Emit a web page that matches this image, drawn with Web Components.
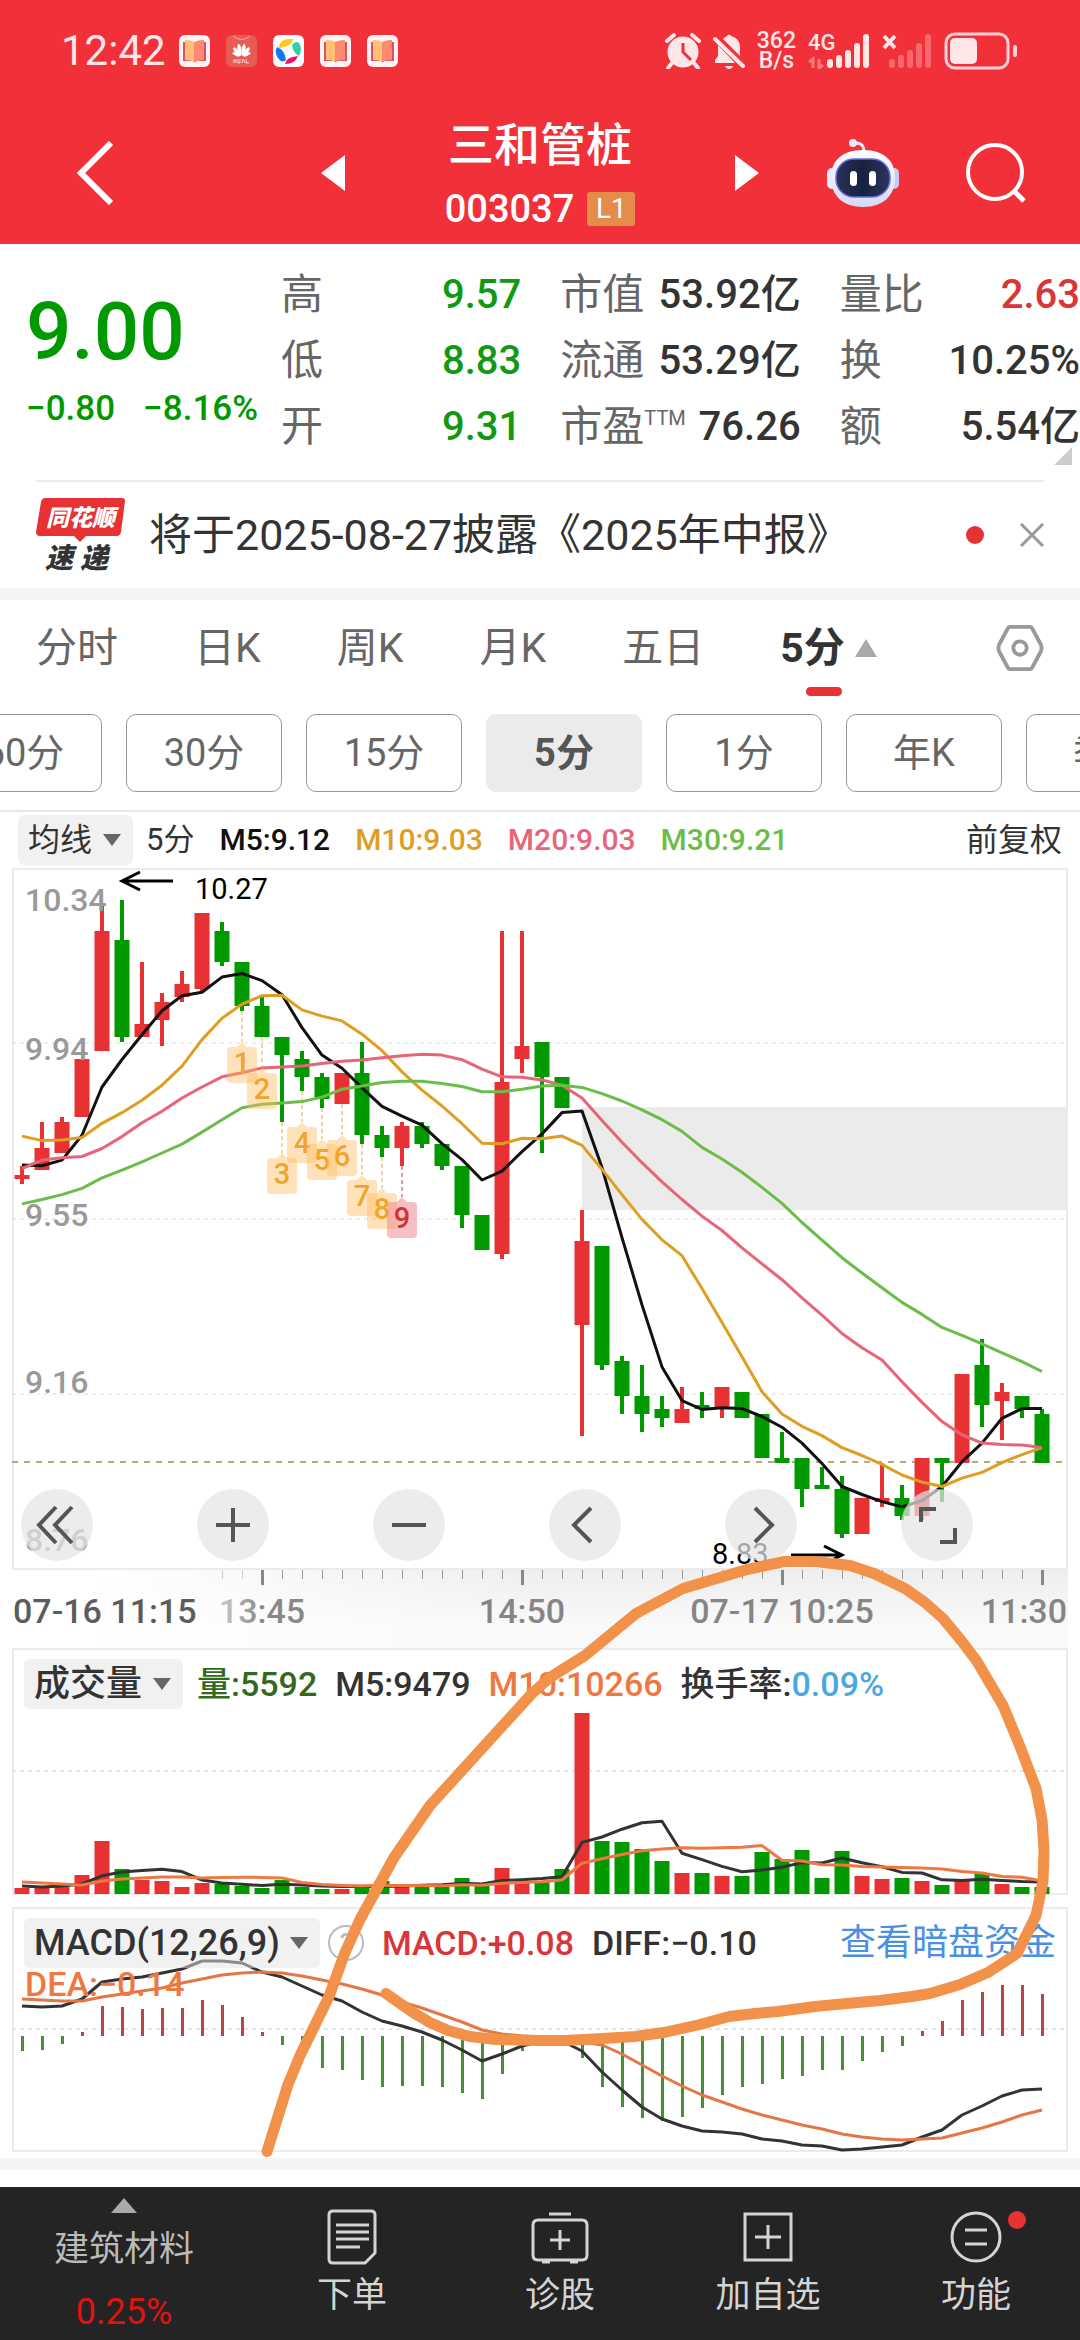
<!DOCTYPE html>
<html lang="zh-CN">
<head>
<meta charset="utf-8">
<meta name="viewport" content="width=device-width, initial-scale=1">
<title>三和管桩 003037</title>
<style>
	body {
		margin: 0;
		background: #fff;
		color: #333;
		font-family: Roboto, "Noto Sans CJK SC", sans-serif;
	}
</style>
</head>
<body>
<stock-page></stock-page>

<script>
// Shared by every element: button/link reset.
const RESET = `
	*, *::before, *::after { box-sizing: border-box; }
	button, select { font: inherit; color: inherit; background: none; border: 0; padding: 0; margin: 0; appearance: none; }
	a { color: inherit; text-decoration: none; }
	svg { display: block; flex: none; }
`;

class BaseElement extends HTMLElement {
	constructor() {
		super();
		this.attachShadow({ mode: "open" });
	}

	connectedCallback() {
		this.shadowRoot.innerHTML = `<style>${RESET}${this.styles()}</style>${this.markup()}`;
	}
}

// ---------- market data ----------

// [up, high, body top, body bottom, low]
const CANDLES = [
	[1, 9.67, 9.65, 9.65, 9.63], [1, 9.77, 9.71, 9.66, 9.66], [1, 9.78, 9.77, 9.7, 9.7],
	[1, 9.91, 9.91, 9.78, 9.78], [1, 10.26, 10.2, 9.93, 9.93], [0, 10.27, 10.18, 9.96, 9.95],
	[1, 10.13, 9.99, 9.96, 9.96], [1, 10.06, 10.04, 10, 9.94], [1, 10.11, 10.08, 10.05, 10.04],
	[1, 10.24, 10.24, 10.07, 10.06], [0, 10.22, 10.2, 10.13, 10.12], [0, 10.13, 10.13, 10.03, 10.02],
	[0, 10.05, 10.03, 9.96, 9.96], [0, 9.96, 9.96, 9.92, 9.77], [0, 9.93, 9.91, 9.87, 9.84],
	[0, 9.88, 9.87, 9.82, 9.8], [1, 9.88, 9.88, 9.81, 9.81], [0, 9.95, 9.88, 9.74, 9.72],
	[0, 9.76, 9.74, 9.71, 9.69], [1, 9.77, 9.76, 9.71, 9.67], [0, 9.77, 9.76, 9.72, 9.71],
	[0, 9.72, 9.72, 9.67, 9.66], [0, 9.67, 9.67, 9.56, 9.53], [0, 9.56, 9.56, 9.48, 9.48],
	[1, 10.2, 9.86, 9.47, 9.46], [1, 10.2, 9.94, 9.91, 9.88], [0, 9.95, 9.95, 9.87, 9.7],
	[0, 9.87, 9.87, 9.8, 9.8], [1, 9.57, 9.5, 9.31, 9.06], [0, 9.49, 9.49, 9.22, 9.21],
	[0, 9.24, 9.23, 9.15, 9.11], [0, 9.22, 9.15, 9.11, 9.07], [0, 9.15, 9.12, 9.1, 9.08],
	[1, 9.17, 9.12, 9.09, 9.09], [0, 9.16, 9.13, 9.12, 9.1], [1, 9.17, 9.17, 9.12, 9.1],
	[0, 9.16, 9.16, 9.1, 9.1], [0, 9.11, 9.11, 9.01, 9.01], [0, 9.07, 9.01, 9, 9],
	[0, 9.01, 9.01, 8.94, 8.9], [0, 8.99, 8.95, 8.94, 8.94], [0, 8.97, 8.94, 8.84, 8.83],
	[1, 8.92, 8.92, 8.84, 8.84], [1, 9, 8.92, 8.92, 8.9], [0, 8.95, 8.92, 8.88, 8.87],
	[1, 9.01, 9.01, 8.88, 8.87], [0, 9.01, 9.01, 9, 8.91], [1, 9.2, 9.2, 9, 9],
	[0, 9.28, 9.22, 9.13, 9.08], [1, 9.18, 9.16, 9.14, 9.05], [0, 9.15, 9.15, 9.12, 9.1],
	[0, 9.12, 9.11, 9, 9],
];

const VOLUMES = [
	6, 6, 7, 19, 53, 25, 14, 13, 7, 11, 10, 8, 6, 14, 7, 5, 5, 8, 13, 9, 9, 7, 16, 9, 26, 13,
	13, 25, 181, 53, 52, 45, 33, 21, 21, 18, 18, 42, 35, 44, 16, 43, 18, 15, 16, 13, 9, 15, 21, 10, 7, 7,
];

const MACD = [
	-15, -14, -8, 4, 30, 29, 27, 28, 28, 36, 31, 19, 4, -9, -20, -32, -34, -44, -51, -50, -50, -51, -57, -63, -38, -15,
	-5, -4, -22, -51, -71, -82, -85, -81, -72, -59, -51, -48, -43, -40, -34, -34, -25, -16, -10, 5, 15, 36, 44, 51, 51, 42,
];
const DIFF = [
	99, 100, 99, 92, 75, 72, 70, 66, 62, 54, 54, 56, 65, 70, 79, 88, 94, 105, 114, 119, 125, 133, 143, 154, 147, 139,
	134, 134, 144, 165, 183, 200, 212, 219, 224, 225, 227, 232, 234, 238, 239, 243, 242, 240, 238, 230, 223, 208, 199, 189, 183, 182,
];
const DEA = [
	92, 93, 94, 94, 90, 87, 84, 81, 76, 72, 68, 66, 65, 66, 69, 73, 77, 82, 88, 95, 101, 108, 115, 123, 127, 129,
	130, 131, 135, 138, 147, 158, 169, 179, 188, 195, 202, 208, 213, 218, 222, 227, 230, 232, 233, 232, 231, 226, 221, 215, 208, 203,
];

// Averages for the first bars, whose window reaches back before the chart.
const LEAD = {
	5: [9.672, 9.67, 9.683, 9.739],
	10: [9.737, 9.727, 9.728, 9.734, 9.766, 9.79, 9.818, 9.852, 9.895],
	20: [9.664, 9.683, 9.688, 9.691, 9.709, 9.736, 9.767, 9.793, 9.823, 9.848, 9.871, 9.88, 9.891, 9.893, 9.895, 9.901, 9.906, 9.909, 9.914],
	30: [9.584, 9.594, 9.605, 9.619, 9.643, 9.66, 9.679, 9.699, 9.719, 9.746, 9.774, 9.801, 9.809, 9.812, 9.815, 9.825, 9.843, 9.85, 9.858, 9.861, 9.861, 9.856, 9.849, 9.837, 9.837, 9.843, 9.85, 9.852, 9.847],
};
const VOL_LEAD = {
	5: [8, 7, 8, 10],
	10: [12, 11, 10, 9, 13, 15, 16, 17, 17],
};

const RED = "#e73132";
const GREEN = "#009900";

const xAt = (i) => 10 + i * 20;
const priceY = (p) => Math.round(1 + (10.34 - p) * 443);

function average(values, n, lead) {
	return values.map((v, i) => {
		if (i < n - 1) return lead[i];
		return values.slice(i - n + 1, i + 1).reduce((a, b) => a + b, 0) / n;
	});
}

function line(ys, color, width = 3) {
	const points = ys.map((y, i) => `${xAt(i)},${y.toFixed(1)}`).join(" ");
	return `<polyline points="${points}" fill="none" stroke="${color}" stroke-width="${width}" stroke-linejoin="round"/>`;
}

const caret = `<svg class="caret" width="18" height="14" viewBox="0 0 18 14" aria-hidden="true"><path d="M0 1h18L9 13z" fill="#666"/></svg>`;

// ---------- status bar ----------

class StatusBar extends BaseElement {
	styles() {
		return `
			:host { display: flex; align-items: center; height: 102px; padding: 0 63px 0 61px; color: #ffe6e7; }
			time { font-size: 42px; line-height: 48px; margin-right: 13px; }
			.apps { display: flex; gap: 16px; }
			.right { margin-left: auto; display: flex; align-items: center; gap: 12px; }
			.speed { font-size: 23px; line-height: 20px; text-align: center; font-weight: 500; }
		`;
	}

	markup() {
		const book = `<svg width="31" height="32" viewBox="0 0 31 32"><rect width="31" height="32" rx="6" fill="#fff4f2"/><path d="M4 7h23v19H17l-1.500 1.500L14 26H4z" fill="#d8506a"/><path d="M6 5q6 0 9.500 2v20Q12 25 6 25z" fill="#ffbf74"/><path d="M25 5q-6 0-9.500 2v20Q19 25 25 25z" fill="#ff8a70"/></svg>`;
		const bars = (fill) => [9, 13, 18, 25, 34].map((h, i) => `<rect x="${i * 9}" y="${35 - h}" width="6" height="${h}" rx="3" fill="${fill}"/>`).join("");
		return `
			<time>12:42</time>
			<div class="apps">
				${book}
				<svg width="31" height="32" viewBox="0 0 31 32"><rect width="31" height="32" rx="6" fill="#e85b52"/><path d="M7 1q8.500 7 17 0" fill="none" stroke="#ffb0a0"/><g fill="#fff"><ellipse cx="13.500" cy="15" rx="2" ry="6" transform="rotate(-8 13.500 15)"/><ellipse cx="17.500" cy="15" rx="2" ry="6" transform="rotate(8 17.500 15)"/><ellipse cx="10.500" cy="16.500" rx="1.800" ry="5" transform="rotate(-35 10.500 16.500)"/><ellipse cx="20.500" cy="16.500" rx="1.800" ry="5" transform="rotate(35 20.500 16.500)"/><ellipse cx="10" cy="19.500" rx="1.300" ry="4" transform="rotate(-65 10 19.500)"/><ellipse cx="21" cy="19.500" rx="1.300" ry="4" transform="rotate(65 21 19.500)"/></g><path d="M8 24v4M8 26h2M10 24v4M12 24v4h2v-4M16 28l1-4 2 4M20 24v4h3" fill="none" stroke="#fff" stroke-width=".7"/></svg>
				<svg width="31" height="32" viewBox="0 0 31 32"><rect width="31" height="32" rx="6" fill="#fff"/><path d="M6 13Q6 3 20 4q0 7-14 9z" fill="#f8cc18"/><path d="M19 10q3-5 7-2 4 6 0 13-6-3-7-11z" fill="#34cfa5"/><path d="M25 21q-3 8-13 8 1-7 13-8z" fill="#f0135f"/><path d="M4 12q8 3 9 13-4 4-8-2-4-6-1-11z" fill="#1476f2"/></svg>
				${book}${book}
			</div>
			<div class="right">
				<svg width="36" height="36" viewBox="0 0 36 36" aria-label="闹钟"><g fill="#ffe6e7"><circle cx="18" cy="19" r="15.500"/><path d="M2 8l7-6M34 8l-7-6M7 30l-4 5M29 30l4 5" stroke="#ffe6e7" stroke-width="4" stroke-linecap="round"/></g><path d="M18 10v9l8 8" fill="none" stroke="#f23039" stroke-width="3"/></svg>
				<svg width="32" height="36" viewBox="0 0 32 36" aria-label="静音"><g fill="#ffe6e7"><path d="M5 12l17 18H2v-3l3-4zM10 6q3-3 4-3 2-3 4 0 9 2 9 12v8z"/><path d="M12 33h8q-1 3-4 3t-4-3z"/></g><path d="M2 6l28 27" stroke="#ffe6e7" stroke-width="4" stroke-linecap="round"/></svg>
				<div class="speed">362<br>B/s</div>
				<svg width="62" height="36" viewBox="0 0 62 36"><text x="0" y="17" font-size="22" font-weight="500" fill="#ffe6e7">4G</text><path d="M5 35V26l-4 3M11 26v9l4-3" fill="none" stroke="#f87a80" stroke-width="3"/><g transform="translate(19 0)">${bars("#ffe6e7")}</g></svg>
				<svg width="50" height="36" viewBox="0 0 50 36"><path d="M2 3l11 12M13 3L2 15" stroke="#ffe6e7" stroke-width="4"/><g transform="translate(7 0)">${bars("#f8676d")}</g></svg>
				<svg width="73" height="38" viewBox="0 0 73 38" aria-label="电量"><rect x="2" y="2" width="62" height="34" rx="9" fill="none" stroke="#ffd0d3" stroke-width="3"/><rect x="6" y="6" width="27" height="26" rx="5" fill="#ffe6e7"/><rect x="69" y="13" width="4" height="12" rx="2" fill="#ffd0d3"/></svg>
			</div>`;
	}
}

// ---------- title bar ----------

class TitleBar extends BaseElement {
	styles() {
		return `
			:host { display: grid; grid-template-columns: 1fr auto 1fr; align-items: center; height: 142px; color: #fff; }
			.side { display: flex; align-items: center; justify-content: space-between; }
			.left { padding: 0 100px 0 76px; }
			.right { padding: 0 54px 0 100px; }
			.name { padding-top: 8px; }
			h1 { margin: 0; font-size: 46px; line-height: 64px; font-weight: 500; text-align: center; }
			p { margin: 0; display: flex; align-items: center; gap: 13px; font-size: 38px; line-height: 64px; font-weight: 500; }
			.tag { background: #e58c4a; border-radius: 3px; font-size: 28px; line-height: 34px; width: 48px; text-align: center; font-weight: 400; }
		`;
	}

	markup() {
		return `
			<div class="side left">
				<button aria-label="返回"><svg width="38" height="64" viewBox="0 0 38 64"><path d="M35 2L5 32l30 30" fill="none" stroke="#fff" stroke-width="6"/></svg></button>
				<button aria-label="上一只"><svg width="24" height="36" viewBox="0 0 24 36"><path d="M24 0v36L0 18z" fill="#fff"/></svg></button>
			</div>
			<div class="name">
				<h1>三和管桩</h1>
				<p>003037<span class="tag">L1</span></p>
			</div>
			<div class="side right">
				<button aria-label="下一只"><svg width="24" height="36" viewBox="0 0 24 36"><path d="M0 0v36l24-18z" fill="#fff"/></svg></button>
				<button aria-label="智能助手"><svg width="72" height="68" viewBox="0 0 72 68">
					<defs>
						<linearGradient id="head" x2="0" y2="1"><stop offset="0" stop-color="#fff"/><stop offset="1" stop-color="#d5daf5"/></linearGradient>
						<linearGradient id="visor"><stop offset="0" stop-color="#2a3358"/><stop offset=".5" stop-color="#16213f"/><stop offset="1" stop-color="#2c3561"/></linearGradient>
					</defs>
					<path d="M26 5q11-3 11 8" fill="none" stroke="#ece9fb" stroke-width="3"/><circle cx="26" cy="4" r="4" fill="#ece9fb"/>
					<rect x="0" y="29" width="10" height="21" rx="5" fill="#e8e9fa"/><rect x="62" y="29" width="10" height="21" rx="5" fill="#c8ccf0"/>
					<path d="M36 11c22 0 32 12 32 27 0 19-12 30-32 30S4 57 4 38c0-15 10-27 32-27z" fill="url(#head)"/>
					<rect x="9" y="20" width="54" height="38" rx="18" fill="url(#visor)" stroke="#6f68e0" stroke-width="1.500"/>
					<rect x="23" y="32" width="7" height="15" rx="3.500" fill="#fff"/><rect x="42" y="32" width="7" height="15" rx="3.500" fill="#fff"/>
				</svg></button>
				<button aria-label="搜索"><svg width="60" height="60" viewBox="0 0 60 60"><circle cx="29" cy="29" r="27" fill="none" stroke="#fff" stroke-width="4"/><path d="M48 48l10 10" stroke="#fff" stroke-width="5"/></svg></button>
			</div>`;
	}
}

// ---------- quote ----------

class QuoteBoard extends BaseElement {
	styles() {
		return `
			:host { display: grid; grid-template-columns: 255px 1fr; padding: 18px 0 20px 26px; position: relative; }
			.price { color: #009900; font-weight: 500; padding-top: 22px; }
			.price strong { display: block; font-size: 80px; line-height: 96px; font-weight: 500; }
			.change { display: flex; gap: 28px; font-size: 35px; line-height: 58px; white-space: nowrap; }
			dl { margin: 0; display: grid; grid-template-columns: repeat(3, 1fr); column-gap: 39px; font-size: 42px; line-height: 66px; }
			dl div { display: flex; justify-content: space-between; height: 66px; white-space: nowrap; }
			dt { color: #666; }
			sup { font-size: 20px; line-height: 20px; vertical-align: 16px; }
			dd { margin: 0; font-size: 40px; font-weight: 500; }
			.down { color: #129912; }
			.up { color: #d83638; }
			.corner { position: absolute; right: 8px; bottom: 15px; }
		`;
	}

	markup() {
		const stats = [
			["高", "9.57", "down"], ["市值", "53.92亿"], ["量比", "2.63", "up"],
			["低", "8.83", "down"], ["流通", "53.29亿"], ["换", "10.25%"],
			["开", "9.31", "down"], ["市盈<sup>TTM</sup>", "76.26"], ["额", "5.54亿"],
		];
		return `
			<div class="price">
				<strong>9.00</strong>
				<div class="change"><span>−0.80</span><span>−8.16%</span></div>
			</div>
			<dl>${stats.map(([k, v, c = ""]) => `<div><dt>${k}</dt><dd class="${c}">${v}</dd></div>`).join("")}</dl>
			<svg class="corner" width="18" height="18" viewBox="0 0 18 18"><path d="M18 0v18H0z" fill="#ccc"/></svg>`;
	}
}

// ---------- news ----------

class NewsBar extends BaseElement {
	styles() {
		return `
			:host { display: block; padding: 0 36px; border-bottom: 12px solid #f4f4f4; }
			.row { display: flex; align-items: center; border-top: 2px solid #ebebeb; height: 108px; }
			.logo { margin-right: 24px; overflow: visible; }
			a { font-size: 43px; line-height: 60px; white-space: nowrap; }
			.dot { margin-left: auto; width: 18px; height: 18px; border-radius: 50%; background: #e73132; margin-right: 36px; }
		`;
	}

	markup() {
		return `
			<div class="row">
				<svg class="logo" width="89" height="80" viewBox="0 0 89 80">
					<path d="M9 3h77q3 0 3 3l-4 31q-1 4-4 4H50l-6 6-6-6H4q-4 0-4-4L5 7q1-4 4-4z" fill="#e73132"/>
					<g font-weight="900" font-style="italic" font-family="Noto Sans CJK SC, sans-serif">
						<text x="10" y="31" font-size="23" fill="#fff">同花顺</text>
						<text x="9" y="73" font-size="28" fill="#333">速</text><text x="44" y="73" font-size="28" fill="#333">递</text>
					</g>
				</svg>
				<a href="#">将于2025-08-27披露《2025年中报》</a>
				<span class="dot"></span>
				<button aria-label="关闭"><svg width="24" height="24" viewBox="0 0 24 24"><path d="M1 1l22 22M23 1L1 23" stroke="#999" stroke-width="3"/></svg></button>
			</div>`;
	}
}

// ---------- period tabs ----------

class PeriodTabs extends BaseElement {
	styles() {
		return `
			:host { display: block; border-bottom: 2px solid #e8e8e8; overflow: hidden; }
			.tabs { display: flex; align-items: center; gap: 76px; padding: 0 36px; height: 96px; color: #666; font-size: 41px; line-height: 60px; white-space: nowrap; }
			.on { display: flex; align-items: center; gap: 10px; color: #333; font-weight: 700; position: relative; }
			.on::after { content: ""; position: absolute; left: 26px; bottom: -18px; width: 36px; height: 9px; border-radius: 5px; background: #e73132; }
			.set { margin-left: auto; }
			.pills { display: flex; gap: 24px; margin: 18px 0 18px -54px; }
			.pills button { flex: none; width: 156px; height: 78px; border: 1px solid #999; border-radius: 10px; color: #666; font-size: 38px; line-height: 54px; }
			.pills .active { background: #ebebeb; border-color: #ebebeb; font-weight: 700; color: #555; }
		`;
	}

	markup() {
		const pills = ["60分", "30分", "15分", "5分", "1分", "年K", "季K"];
		return `
			<nav class="tabs">
				${["分时", "日K", "周K", "月K", "五日"].map((t) => `<button>${t}</button>`).join("")}
				<button class="on">5分<svg width="22" height="18" viewBox="0 0 22 18"><path d="M11 0l11 18H0z" fill="#aaa"/></svg></button>
				<button class="set" aria-label="设置"><svg width="48" height="46" viewBox="0 0 50 48"><path d="M15 2h20q2 0 3 2l9 17q1 3 0 6l-9 17q-1 2-3 2H15q-2 0-3-2L3 27q-1-3 0-6l9-17q1-2 3-2z" fill="none" stroke="#999" stroke-width="4"/><circle cx="25" cy="24" r="7" fill="none" stroke="#999" stroke-width="4"/></svg></button>
			</nav>
			<div class="pills">${pills.map((p) => `<button class="${p === "5分" ? "active" : ""}">${p}</button>`).join("")}</div>`;
	}
}

// ---------- indicator picker ----------

class IndicatorPicker extends BaseElement {
	styles() {
		return `
			:host { display: inline-flex; align-items: center; position: relative; background: rgba(228, 228, 228, .5); border-radius: 6px; height: 50px; color: #333; }
			select { height: 50px; padding: 0 40px 0 10px; }
			.caret { position: absolute; right: 12px; pointer-events: none; }
		`;
	}

	markup() {
		const name = this.getAttribute("name");
		return `<select aria-label="指标"><option>${name}</option></select>${caret}`;
	}
}

// ---------- candles ----------

class CandleChart extends BaseElement {
	styles() {
		return `
			:host { display: block; padding: 0 12px; }
			.head { display: flex; align-items: center; gap: 25px; height: 56px; padding: 0 6px; font-size: 30px; line-height: 50px; font-weight: 500; white-space: nowrap; }
			.head indicator-picker { font-size: 32px; font-weight: 400; margin-right: -12px; }
			.head b { font-weight: 400; font-size: 31px; }
			.adjust { margin-left: auto; font-weight: 400; font-size: 32px; }
			.plot { position: relative; }
			.plot svg { width: 100%; height: auto; }
			.tools { position: absolute; left: 9px; bottom: 9px; display: flex; gap: 104px; }
			.tools button { width: 72px; height: 72px; border-radius: 50%; background: rgba(228, 228, 228, .72); display: grid; place-items: center; }
			.tools svg { width: 42px; height: 42px; fill: none; stroke: #555; stroke-width: 4; }
		`;
	}

	candles() {
		return CANDLES.map(([up, high, top, bottom, low], i) => {
			const color = up ? RED : GREEN;
			const y = priceY(top);
			const h = Math.max(priceY(bottom) - y, 4);
			const wick = priceY(high);
			return `<rect x="${xAt(i) - 2}" y="${wick}" width="4" height="${Math.max(priceY(low) - wick, 1)}" fill="${color}"/>
				<rect x="${xAt(i) - 7.5}" y="${y}" width="15" height="${h}" fill="${color}"/>`;
		}).join("");
	}

	// Numbered tags hang under nine bars in a row.
	counts() {
		let out = "";
		for (let n = 1; n <= 9; n++) {
			const i = n + 10;
			const x = xAt(i);
			const low = priceY(CANDLES[i][4]);
			const y = low + 31;
			const last = n === 9;
			out += `<path d="M${x} ${low}v31" stroke="${last ? "#b04040" : "#e0a848"}" stroke-width="1" stroke-dasharray="4 3"/>
				<path d="M${x} ${y}l5 5h6q4 0 4 4v28q0 4-4 4h-22q-4 0-4-4v-28q0-4 4-4h6z" fill="${last ? "#ee8c92" : "#ffb95a"}" fill-opacity="${last ? 0.55 : 0.42}"/>
				<text x="${x}" y="${y + 31}" font-size="29" font-weight="500" text-anchor="middle" fill="${last ? "#d0343a" : "#f2a32c"}">${n}</text>`;
		}
		return out;
	}

	markup() {
		const closes = CANDLES.map((c) => (c[0] ? c[2] : c[3]));
		const ma = (n) => average(closes, n, LEAD[n]).map((p) => 1 + (10.34 - p) * 443);
		const grid = [175, 351, 526].map((y) => `<path d="M0 ${y}h1056" stroke="#ddd" stroke-dasharray="4 4"/>`).join("");
		const scale = [["10.34", 43], ["9.94", 192], ["9.55", 358], ["9.16", 525], ["8.76", 683]];
		const icons = [
			["最左", "M20 3L3 21l17 18M36 3L19 21l17 18"], ["放大", "M21 4v34M4 21h34"], ["缩小", "M4 21h34"],
			["左移", "M27 4L10 21l17 17"], ["右移", "M15 4l17 17-17 17"], ["全屏", "M5 18V5h15M39 24v14H24"],
		];
		return `
			<div class="head">
				<indicator-picker name="均线"></indicator-picker>
				<b>5分</b>
				<span style="color:#111">M5:9.12</span>
				<span style="color:#df9e22">M10:9.03</span>
				<span style="color:#e86478">M20:9.03</span>
				<span style="color:#6bbd4a">M30:9.21</span>
				<span class="adjust">前复权</span>
			</div>
			<div class="plot">
				<svg viewBox="0 0 1056 702">
					<rect x="1" y="1" width="1054" height="700" fill="none" stroke="#ebebeb" stroke-width="2"/>
					${grid}
					<rect x="570" y="239" width="486" height="103" fill="#ebebeb"/>
					<path d="M0 594h1056" stroke="#bba97c" stroke-width="2" stroke-dasharray="6 6"/>
					${this.candles()}
					${line(ma(5), "#111")}${line(ma(10), "#df9e22")}${line(ma(20), "#e86478")}${line(ma(30), "#6bbd4a")}
					${this.counts()}
					<g font-size="32" font-weight="500" fill="#999">${scale.map(([t, y]) => `<text x="13" y="${y}">${t}</text>`).join("")}</g>
					<g fill="none" stroke="#000" stroke-width="3"><path d="M161 13h-51M128 4l-18 9 18 9"/><path d="M779 687h51M812 678l18 9-18 9"/></g>
					<text x="183" y="31" font-size="29">10.27</text>
					<text x="700" y="696" font-size="29">8.83</text>
				</svg>
				<div class="tools">${icons.map(([t, d]) => `<button aria-label="${t}"><svg viewBox="0 0 42 42"><path d="${d}"/></svg></button>`).join("")}</div>
			</div>`;
	}
}

class TimeAxis extends BaseElement {
	styles() {
		return `
			:host { display: block; margin: 0 12px; background: linear-gradient(to right, #fff 8%, rgba(255, 255, 255, 0) 50%), linear-gradient(#eee, #f9f9f9 70%); }
			svg { width: 100%; height: auto; }
		`;
	}

	markup() {
		let ticks = "";
		for (let i = 10; i < 52; i++) {
			const major = i % 13 === 12;
			ticks += `<rect x="${xAt(i) - (major ? 1 : 0)}" y="0" width="${major ? 3 : 1}" height="${major ? 15 : 9}" fill="${major ? "#888" : i < 12 ? "#ccc" : "#999"}"/>`;
		}
		return `
			<svg viewBox="0 0 1056 78">
				<defs><linearGradient id="fade"><stop offset="0" stop-color="#ccc"/><stop offset=".5" stop-color="#888"/></linearGradient></defs>
				${ticks}
				<g font-size="34" font-weight="500" fill="#858585">
					<text x="1" y="53" fill="#5c5c5c">07-16 11:15</text>
					<text x="250" y="53" text-anchor="middle" fill="url(#fade)">13:45</text>
					<text x="510" y="53" text-anchor="middle">14:50</text>
					<text x="770" y="53" text-anchor="middle">07-17 10:25</text>
					<text x="1055" y="53" text-anchor="end">11:30</text>
				</g>
			</svg>`;
	}
}

// ---------- lower panels ----------

// Header laid over the plot in one grid cell.
const PANEL = `
	:host { display: grid; margin: 0 12px; }
	.head, .plot { grid-area: 1 / 1; }
	.plot { width: 100%; height: auto; }
	.head { position: relative; align-self: start; padding: 11px 12px 0; font-size: 34px; line-height: 50px; font-weight: 500; }
	.row { display: flex; align-items: center; gap: 18px; white-space: nowrap; }
	indicator-picker { font-size: 36px; margin-right: -4px; }
`;

class VolumePanel extends BaseElement {
	styles() {
		return PANEL + `:host { margin-bottom: 12px; }`;
	}

	markup() {
		const bars = VOLUMES.map((v, i) => `<rect x="${xAt(i) - 7.5}" y="${246 - v}" width="15" height="${v}" fill="${CANDLES[i][0] ? RED : GREEN}"/>`).join("");
		const ma = (n) => average(VOLUMES, n, VOL_LEAD[n]).map((v) => 246 - v);
		return `
			<svg class="plot" viewBox="0 0 1056 247">
				<rect x="1" y="1" width="1054" height="245" fill="none" stroke="#ebebeb" stroke-width="2"/>
				<path d="M0 123h1056" stroke="#e5e5e5" stroke-width="2" stroke-dasharray="4 4"/>
				${bars}
				${line(ma(5), "#333")}${line(ma(10), "#ef7742")}
			</svg>
			<div class="head"><div class="row">
				<indicator-picker name="成交量"></indicator-picker>
				<span style="color:#33691e">量:5592</span>
				<span>M5:9479</span>
				<span style="color:#ef7742">M10:10266</span>
				<span>换手率:<span style="color:#4aa8e0">0.09%</span></span>
			</div></div>`;
	}
}

class MacdPanel extends BaseElement {
	styles() {
		return PANEL + `
			.help { width: 36px; height: 36px; border: 2px solid #bbb; border-radius: 50%; font-size: 26px; line-height: 30px; color: #bbb; margin: 0 0 0 -6px; }
			.link { margin-left: auto; color: #4a90e2; font-size: 36px; font-weight: 400; }
			.dea { color: #ef7742; line-height: 32px; padding-left: 1px; }
		`;
	}

	markup() {
		const bars = MACD.map((v, i) => `<rect x="${xAt(i) - 1}" y="${v > 0 ? 129 - v : 129}" width="3" height="${Math.abs(v)}" fill="${v > 0 ? "#b94545" : "#459035"}"/>`).join("");
		return `
			<svg class="plot" viewBox="0 0 1056 245">
				<rect x="1" y="1" width="1054" height="243" fill="none" stroke="#ebebeb" stroke-width="2"/>
				<path d="M0 122h1056" stroke="#e5e5e5" stroke-width="2" stroke-dasharray="4 4"/>
				${bars}
				${line(DIFF, "#333")}${line(DEA, "#e47745")}
			</svg>
			<div class="head">
				<div class="row">
					<indicator-picker name="MACD(12,26,9)"></indicator-picker>
					<button class="help" aria-label="说明">?</button>
					<span style="color:#d83638">MACD:+0.08</span>
					<span>DIFF:−0.10</span>
					<a class="link" href="#">查看暗盘资金</a>
				</div>
				<div class="dea">DEA:−0.14</div>
			</div>`;
	}
}

// Hand-drawn loop lying over all of the charts.
class InkLayer extends BaseElement {
	styles() {
		return `
			:host { position: absolute; inset: 0; pointer-events: none; }
			svg { width: 100%; height: 100%; }
		`;
	}

	markup() {
		return `
			<svg viewBox="0 812 1080 1345" aria-hidden="true">
				<path fill="none" stroke="#f2924a" stroke-width="11" stroke-linecap="round" stroke-linejoin="round" d="M267 2151L288 2084 300 2055 329 1996 345 1952 360 1919 394 1857 430 1805 532 1693 550 1677 585 1655 636 1613 683 1588 747 1569 784 1561 815 1561 850 1565 874 1573 905 1588 925 1602 943 1618 962 1641 977 1661 1003 1705 1020 1746 1036 1788 1042 1819 1044 1850 1043 1881 1036 1915 1017 1953 988 1972 960 1984 930 1993 912 1996 880 2000 836 2004 815 2006 778 2011 755 2013 729 2016 700 2024 664 2032 635 2036 602 2038 565 2040 540 2040 496 2039 470 2036 448 2030 430 2022 413 2012 386 1993"/>
			</svg>`;
	}
}

class ChartBoard extends BaseElement {
	styles() {
		return `:host { display: block; position: relative; padding-bottom: 6px; border-bottom: 12px solid #f4f4f4; }`;
	}

	markup() {
		return `
			<candle-chart></candle-chart>
			<time-axis></time-axis>
			<volume-panel></volume-panel>
			<macd-panel></macd-panel>
			<ink-layer></ink-layer>`;
	}
}

// ---------- bottom bar ----------

class BottomNav extends BaseElement {
	styles() {
		return `
			:host { display: grid; grid-template-columns: 248fr repeat(4, 208fr); min-height: 153px; background: #242424; color: #d4d4d4; text-align: center; font-size: 35px; }
			a { display: flex; flex-direction: column; align-items: center; padding-top: 22px; }
			a span { line-height: 50px; margin-top: 6px; }
			.sector { padding-top: 11px; color: #bbb; }
			.sector span { margin-top: 12px; }
			.sector .rate { color: #e01212; font-size: 36px; }
			.icon { position: relative; height: 56px; display: grid; place-items: center; }
			.icon svg { fill: none; stroke: #d4d4d4; stroke-width: 3; }
			.badge::after { content: ""; position: absolute; right: -24px; top: 2px; width: 18px; height: 18px; border-radius: 50%; background: #e73132; }
		`;
	}

	markup() {
		const items = [
			["下单", `<svg width="50" height="56" viewBox="0 0 50 56"><path d="M6 2h38q4 0 4 4v38l-10 10H6q-4 0-4-4V6q0-4 4-4zM9 16h33M9 23h33M9 30h33M9 38h24"/></svg>`],
			["诊股", `<svg width="58" height="54" viewBox="0 0 58 54"><path d="M18 4h22M7 10h44q5 0 5 5v30q0 5-5 5H7q-5 0-5-5V15q0-5 5-5zM29 20v20M19 30h20M11 52h8M39 52h8"/></svg>`],
			["加自选", `<svg width="50" height="52" viewBox="0 0 50 52"><path d="M2 3h46v46H2zM25 14v24M12 26h26"/></svg>`],
			["功能", `<svg width="52" height="52" viewBox="0 0 52 52"><circle cx="26" cy="26" r="24"/><path d="M15 19h22M15 33h22"/></svg>`],
		];
		return `
			<a class="sector" href="#"><svg width="26" height="15" viewBox="0 0 26 15"><path d="M13 0l13 15H0z" fill="#aaa"/></svg><span>建筑材料</span><span class="rate">0.25%</span></a>
			${items.map(([t, svg]) => `<a href="#"><div class="icon ${t === "功能" ? "badge" : ""}">${svg}</div><span>${t}</span></a>`).join("")}`;
	}
}

class StockPage extends BaseElement {
	styles() {
		return `
			:host { display: flex; flex-direction: column; min-height: 100vh; }
			header { background: #f23039; }
			bottom-nav { margin-top: auto; }
		`;
	}

	markup() {
		return `
			<header>
				<status-bar></status-bar>
				<title-bar></title-bar>
			</header>
			<quote-board></quote-board>
			<news-bar></news-bar>
			<period-tabs></period-tabs>
			<chart-board></chart-board>
			<bottom-nav></bottom-nav>`;
	}
}

customElements.define("status-bar", StatusBar);
customElements.define("title-bar", TitleBar);
customElements.define("quote-board", QuoteBoard);
customElements.define("news-bar", NewsBar);
customElements.define("period-tabs", PeriodTabs);
customElements.define("indicator-picker", IndicatorPicker);
customElements.define("candle-chart", CandleChart);
customElements.define("time-axis", TimeAxis);
customElements.define("volume-panel", VolumePanel);
customElements.define("macd-panel", MacdPanel);
customElements.define("ink-layer", InkLayer);
customElements.define("chart-board", ChartBoard);
customElements.define("bottom-nav", BottomNav);
customElements.define("stock-page", StockPage);
</script>
</body>
</html>
